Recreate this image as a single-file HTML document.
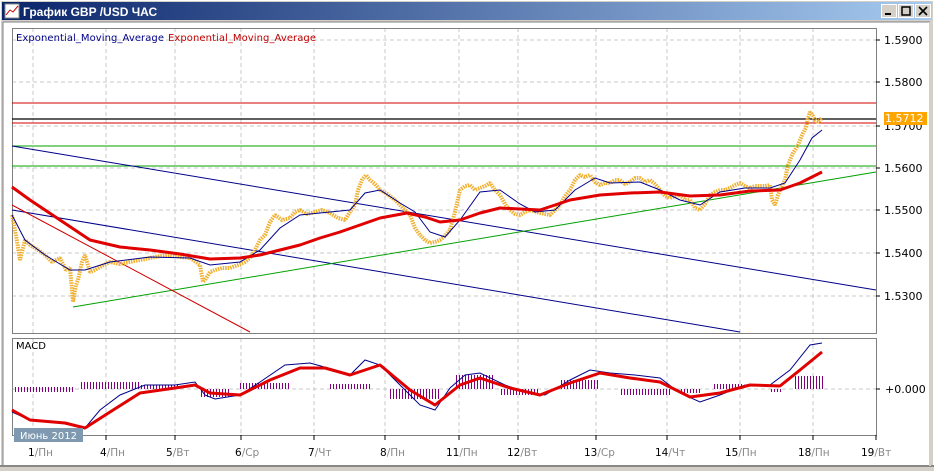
<!DOCTYPE html>
<html><head><meta charset="utf-8"><style>
html,body{margin:0;padding:0;width:934px;height:471px;overflow:hidden;background:#d4d0c8;font-family:"Liberation Sans","DejaVu Sans",sans-serif}
svg{position:absolute;left:0;top:0}
</style></head><body>
<svg width="934" height="471" viewBox="0 0 934 471" xmlns="http://www.w3.org/2000/svg" font-family="DejaVu Sans, Liberation Sans, sans-serif">
<defs>
<linearGradient id="tb" x1="0" x2="1"><stop offset="0" stop-color="#0a246a"/><stop offset="1" stop-color="#a6caf0"/></linearGradient>
<pattern id="hb" width="3" height="10" patternUnits="userSpaceOnUse"><rect x="0" y="0" width="1" height="10" fill="#800080"/></pattern>
</defs>
<rect x="0" y="0" width="934" height="471" fill="#d4d0c8"/>
<rect x="0.5" y="0.5" width="933" height="470" fill="none" stroke="#fff"/>
<rect x="2" y="2" width="930" height="18" fill="url(#tb)"/>
<rect x="5" y="4" width="14" height="14" fill="#fff" stroke="#888"/>
<polyline points="6,15 10,10 13,12 18,6" fill="none" stroke="#c00" stroke-width="1"/>
<text x="23" y="16" fill="#fff" font-size="12" font-weight="bold" font-family="Liberation Sans, sans-serif">График GBP /USD  ЧАС</text>
<g fill="#d4d0c8" stroke="#fff"><rect x="881.5" y="4.5" width="15" height="13"/><rect x="898.5" y="4.5" width="15" height="13"/><rect x="915.5" y="4.5" width="15" height="13"/></g>
<rect x="885" y="13" width="6" height="2" fill="#000"/>
<rect x="902" y="7" width="8" height="8" fill="none" stroke="#000" stroke-width="1.5"/>
<path d="M919,7 L927,15 M927,7 L919,15" stroke="#000" stroke-width="1.6"/>
<rect x="3" y="22" width="927" height="443" fill="#fff"/>
<line x1="3" y1="22" x2="3" y2="465" stroke="#808080"/>
<line x1="3" y1="22" x2="930" y2="22" stroke="#808080"/>
<g stroke="#c8c8c8" stroke-dasharray="4,3">
<path d="M33,28V333M106,28V333M175,28V333M241,28V333M314,28V333M385,28V333M459,28V333M518,28V333M596,28V333M667,28V333M740,28V333M813,28V333"/>
<path d="M33,338V435M106,338V435M175,338V435M241,338V435M314,338V435M385,338V435M459,338V435M518,338V435M596,338V435M667,338V435M740,338V435M813,338V435"/>
<path d="M12,40H876M12,82H876M12,126H876M12,168H876M12,210H876M12,253H876M12,296H876M12,389H876"/>
</g>
<rect x="12.5" y="28.5" width="864" height="305" fill="none" stroke="#808080"/>
<rect x="12.5" y="338.5" width="864" height="97" fill="none" stroke="#808080"/>
<g stroke="#000"><path d="M876,40h4M876,82h4M876,126h4M876,168h4M876,210h4M876,253h4M876,296h4M876,389h4"/>
<path d="M33,435v5M106,435v5M175,435v5M241,435v5M314,435v5M385,435v5M459,435v5M518,435v5M596,435v5M667,435v5M740,435v5M813,435v5M876,435v5"/></g>
<g font-size="11" fill="#000">
<text x="884" y="44">1.5900</text><text x="884" y="86">1.5800</text><text x="884" y="130">1.5700</text><text x="884" y="172">1.5600</text><text x="884" y="214">1.5500</text><text x="884" y="257">1.5400</text><text x="884" y="300">1.5300</text><text x="885" y="393">+0.000</text>
</g>
<rect x="884" y="112" width="43" height="13" fill="#ffa500"/>
<text x="885" y="122" font-size="11" fill="#fff">1.5712</text>
<text x="16" y="41" font-size="10" fill="#00008b" textLength="148">Exponential_Moving_Average</text>
<text x="168" y="41" font-size="10" fill="#c00000" textLength="148">Exponential_Moving_Average</text>
<text x="16" y="349" font-size="10" fill="#000">MACD</text>
<g stroke-width="1">
<line x1="12" y1="103" x2="876" y2="103" stroke="#d00000"/>
<line x1="12" y1="123" x2="876" y2="123" stroke="#d00000"/>
<line x1="12" y1="119" x2="876" y2="119" stroke="#000" stroke-width="1.3"/>
<line x1="12" y1="146" x2="876" y2="146" stroke="#00a000"/>
<line x1="12" y1="166" x2="876" y2="166" stroke="#00a000"/>
<line x1="12" y1="146" x2="876" y2="290" stroke="#00008b"/>
<line x1="12" y1="210" x2="740" y2="332" stroke="#00008b"/>
<line x1="73" y1="307" x2="876" y2="172" stroke="#00a000"/>
<line x1="12" y1="205" x2="250" y2="332" stroke="#d00000"/>
</g>
<polyline fill="none" stroke="#f0b030" stroke-width="4" stroke-linejoin="bevel" stroke-dasharray="1.5,1" points="12,215 16,235 20,260 25,240 30,245 38,250 45,255 52,262 60,258 66,270 70,268 72,290 73,302 76,285 78,280 82,262 85,255 90,272 95,270 102,266 110,262 120,264 130,262 140,260 150,258 160,256 170,255 180,257 190,258 196,262 200,265 203,282 205,280 210,272 215,270 222,268 230,268 238,265 245,262 250,258 255,250 260,240 265,235 270,222 275,215 282,220 290,218 295,212 300,210 307,214 315,212 322,210 330,213 338,218 345,220 350,212 355,205 358,190 362,180 366,175 370,180 375,184 380,190 387,194 395,200 403,208 410,215 415,228 420,235 425,240 430,243 435,242 440,240 445,236 450,230 455,212 460,190 465,186 470,185 475,190 480,188 485,186 490,183 495,190 500,195 505,204 510,210 515,214 520,215 525,212 530,210 540,213 550,215 555,210 560,205 565,196 570,190 575,180 580,175 585,177 590,175 595,182 600,185 605,183 610,183 615,180 620,180 625,184 630,182 635,178 640,178 645,182 650,180 655,184 660,190 665,196 670,198 675,196 680,195 685,200 690,200 695,208 700,210 705,204 710,195 715,192 720,190 725,190 730,188 735,185 740,183 745,186 750,188 755,186 760,186 765,186 770,185 772,200 775,205 778,195 780,190 783,184 785,180 788,165 790,160 793,153 795,150 798,145 800,140 803,133 806,128 808,118 810,112 813,116 815,120 818,122 822,118"/>
<polyline fill="none" stroke="#00008b" stroke-width="1" points="12,215 25,240 45,255 70,270 85,270 110,262 150,257 190,258 210,265 240,262 260,250 280,228 300,215 330,212 350,210 365,193 380,190 400,203 415,212 430,232 445,237 460,220 480,192 500,190 520,204 535,212 555,210 575,190 595,178 610,183 640,182 660,190 680,200 700,205 720,192 745,188 770,188 785,183 800,160 812,138 822,130"/>
<polyline fill="none" stroke="#e00000" stroke-width="3" stroke-linejoin="round" points="12,187 30,200 60,220 90,240 120,247 150,250 180,254 210,259 240,258 260,255 280,250 300,245 320,238 340,232 360,225 380,218 407,213 425,217 440,222 460,220 480,213 500,208 540,210 570,200 600,195 630,193 660,192 690,196 720,195 750,191 780,190 800,183 822,172"/>
<g fill="url(#hb)">
<rect x="15" y="387" width="60" height="5"/>
<rect x="80" y="382" width="60" height="7"/>
<rect x="140" y="385" width="40" height="4"/>
<rect x="200" y="389" width="30" height="8"/>
<rect x="240" y="383" width="50" height="6"/>
<rect x="330" y="384" width="40" height="5"/>
<rect x="390" y="389" width="50" height="10"/>
<rect x="455" y="375" width="40" height="14"/>
<rect x="500" y="389" width="40" height="6"/>
<rect x="560" y="380" width="40" height="9"/>
<rect x="620" y="389" width="50" height="6"/>
<rect x="680" y="389" width="20" height="4"/>
<rect x="713" y="384" width="30" height="5"/>
<rect x="770" y="389" width="12" height="3"/>
<rect x="793" y="376" width="30" height="13"/>
</g>
<polyline fill="none" stroke="#00008b" stroke-width="1" points="12,412 30,420 60,423 85,428 100,410 120,395 145,385 175,385 195,382 205,395 215,399 240,395 260,382 285,365 310,363 335,370 350,375 365,360 380,365 400,385 420,405 435,410 450,388 465,375 480,373 505,385 525,392 545,395 570,380 590,370 610,373 635,375 660,378 680,393 700,402 720,395 745,385 770,385 790,370 810,345 822,343"/>
<polyline fill="none" stroke="#e00000" stroke-width="3" stroke-linejoin="round" points="12,410 30,420 65,423 85,428 110,412 140,393 175,388 195,385 210,393 240,395 270,380 300,368 325,368 350,375 380,365 410,390 435,405 460,385 480,378 510,388 540,395 570,383 600,373 630,378 660,382 690,397 720,393 750,385 780,386 800,370 822,352"/>
<rect x="14" y="428" width="69" height="14" fill="#7f9ab0"/>
<text x="20" y="439" font-size="10" fill="#fff">Июнь 2012</text>
<g font-size="10.5" fill="#000">
<text x="28" y="456">1<tspan fill="#888">/Пн</tspan></text>
<text x="100" y="456">4<tspan fill="#888">/Пн</tspan></text>
<text x="166" y="456">5<tspan fill="#888">/Вт</tspan></text>
<text x="235" y="456">6<tspan fill="#888">/Ср</tspan></text>
<text x="308" y="456">7<tspan fill="#888">/Чт</tspan></text>
<text x="380" y="456">8<tspan fill="#888">/Пн</tspan></text>
<text x="446" y="456">11<tspan fill="#888">/Пн</tspan></text>
<text x="507" y="456">12<tspan fill="#888">/Вт</tspan></text>
<text x="584" y="456">13<tspan fill="#888">/Ср</tspan></text>
<text x="655" y="456">14<tspan fill="#888">/Чт</tspan></text>
<text x="725" y="456">15<tspan fill="#888">/Пн</tspan></text>
<text x="798" y="456">18<tspan fill="#888">/Пн</tspan></text>
<text x="861" y="456">19<tspan fill="#888">/Вт</tspan></text>
</g>
<rect x="0" y="465" width="934" height="6" fill="#d4d0c8"/>
<line x1="0" y1="466" x2="934" y2="466" stroke="#404040"/>
<line x1="930" y1="22" x2="930" y2="466" stroke="#d4d0c8" stroke-width="2"/>
</svg>
</body></html>
